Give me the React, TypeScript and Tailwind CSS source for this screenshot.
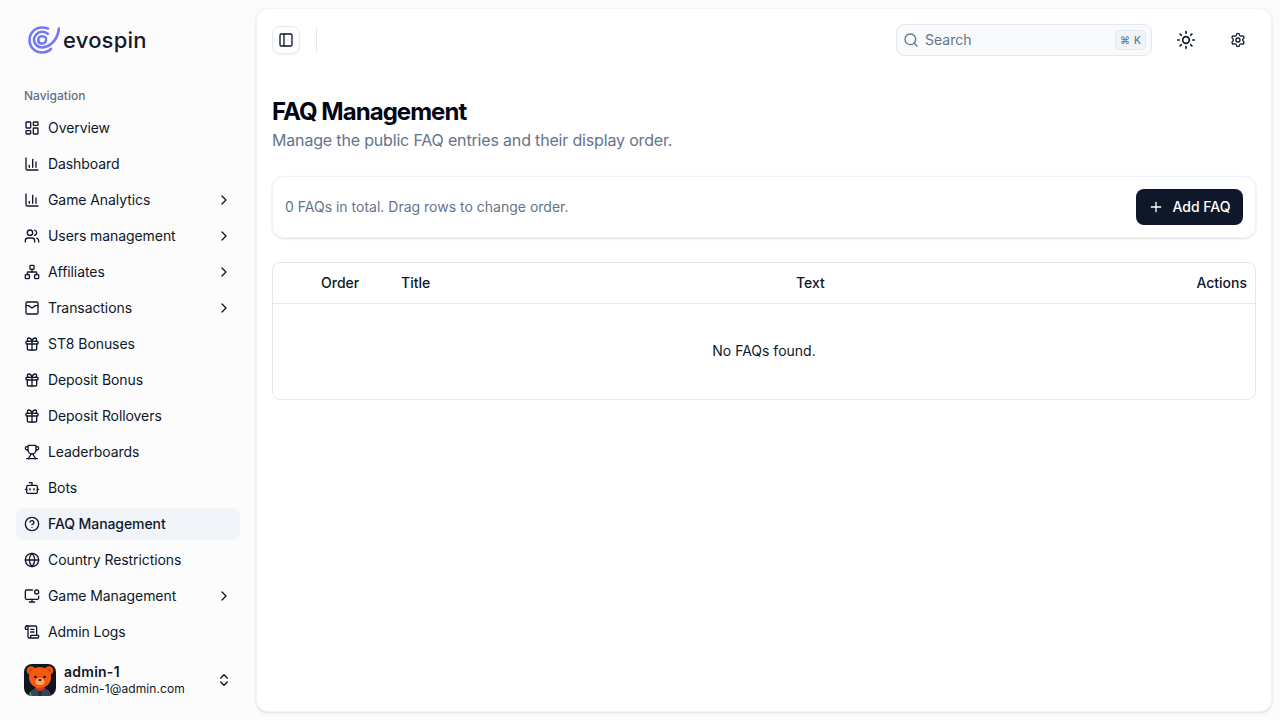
import {
  Bot,
  ChartColumn,
  ChevronRight,
  ChevronsUpDown,
  CircleHelp,
  Gift,
  Globe,
  LayoutDashboard,
  MonitorDot,
  Network,
  PanelLeft,
  Plus,
  ScrollText,
  Search,
  Settings,
  Sun,
  Trophy,
  Users,
} from 'lucide-react';
import type { ComponentType } from 'react';

const TransactionsIcon = ({ className }: { className?: string }) => (
  <svg viewBox="0 0 24 24" fill="none" stroke="currentColor" strokeWidth="2" strokeLinecap="round" strokeLinejoin="round" className={className}>
    <rect x="3" y="3" width="18" height="18" rx="2" />
    <path d="M3 8.500h4l5 3.500 5-3.500h4" />
  </svg>
);

const navItems: { label: string; icon: ComponentType<{ className?: string }>; arrow?: boolean; active?: boolean }[] = [
  { label: 'Overview', icon: LayoutDashboard },
  { label: 'Dashboard', icon: ChartColumn },
  { label: 'Game Analytics', icon: ChartColumn, arrow: true },
  { label: 'Users management', icon: Users, arrow: true },
  { label: 'Affiliates', icon: Network, arrow: true },
  { label: 'Transactions', icon: TransactionsIcon, arrow: true },
  { label: 'ST8 Bonuses', icon: Gift },
  { label: 'Deposit Bonus', icon: Gift },
  { label: 'Deposit Rollovers', icon: Gift },
  { label: 'Leaderboards', icon: Trophy },
  { label: 'Bots', icon: Bot },
  { label: 'FAQ Management', icon: CircleHelp, active: true },
  { label: 'Country Restrictions', icon: Globe },
  { label: 'Game Management', icon: MonitorDot, arrow: true },
  { label: 'Admin Logs', icon: ScrollText },
];

const Logo = () => (
  <svg viewBox="0 0 32 28" fill="none" stroke="#7178f4" strokeLinecap="round" className="h-[28px] w-[32px]">
    <path d="M20 2.500C18 1.800 16 1.500 14 1.500 7 1.500 1.500 7 1.500 14S7 26.500 14 26.500c3.500 0 6.500-1.200 9-3.500" strokeWidth="2.600" />
    <path d="M31 2.500c-1 7-4 12.500-8 15.500-3 2.300-6 3.500-9 3.500-4.300 0-8-3.300-8-7.500s3.500-8.300 8-8.300c2.200 0 4.200.7 5.800 2" strokeWidth="2.600" />
    <path d="M18 14c0 2.200-1.800 3.600-4 3.600s-3.800-1.400-3.800-3.600 1.700-3.800 3.800-3.800c1.700 0 3 .7 4 1.800" strokeWidth="2.600" />
  </svg>
);

const Avatar = () => (
  <svg viewBox="0 0 32 32" className="h-8 w-8 rounded-lg">
    <rect width="32" height="32" fill="#10151f" />
    <path d="M5 32c0-5 4-8 11-8s11 3 11 8z" fill="#39465a" />
    <path d="M5 32c0-2 .6-3.500 1.500-4.500L8 32z" fill="#2f9e58" />
    <path d="M11 24.500l5 3 5-3-1-2.500h-8z" fill="#dc3418" />
    <path d="M14.500 27h3v5h-3z" fill="#232c3b" />
    <circle cx="7" cy="6.500" r="4.300" fill="#ef5a10" />
    <circle cx="25" cy="6.500" r="4.300" fill="#ef5a10" />
    <circle cx="7" cy="6.800" r="2.200" fill="#d8430c" />
    <circle cx="25" cy="6.800" r="2.200" fill="#d8430c" />
    <ellipse cx="16" cy="13.500" rx="11" ry="10.500" fill="#f4590f" />
    <ellipse cx="16" cy="17.500" rx="4.500" ry="3.500" fill="#f9a468" />
    <circle cx="11.500" cy="13" r="1.300" fill="#1a0e08" />
    <circle cx="20.500" cy="13" r="1.300" fill="#1a0e08" />
    <ellipse cx="16" cy="16" rx="1.700" ry="1.100" fill="#2a120a" />
  </svg>
);

const App = () => {
  return (
    <div className="flex h-screen w-full overflow-hidden bg-[#fcfcfd] font-['Inter',sans-serif] text-[#0f172a]">
      <aside className="flex w-[256px] shrink-0 flex-col p-2">
        {/* Logo */}
        <div className="flex h-[63px] items-center gap-[3px] pl-[20px]">
          <Logo />
          <span className="text-[22px] font-medium leading-none tracking-[0.2px] text-[#141a2c]">evospin</span>
        </div>

        {/* Navigation */}
        <div className="flex-1 p-2 pt-[9px]">
          <div className="flex h-8 items-center px-2 text-xs font-medium text-[#5f7189]">Navigation</div>
          <ul className="flex flex-col gap-1 tracking-[-0.08px]">
            {navItems.map((item) => (
              <li
                key={item.label}
                className={`flex h-8 items-center gap-2 rounded-lg px-2 text-sm ${item.active ? 'bg-[#f1f5f9] font-medium' : ''}`}
              >
                <item.icon className="h-4 w-4 shrink-0" />
                <span className="flex-1">{item.label}</span>
                {item.arrow && <ChevronRight className="h-4 w-4 shrink-0" />}
              </li>
            ))}
          </ul>
        </div>

        {/* User */}
        <div className="mb-2 flex h-12 items-center gap-2 px-4">
          <Avatar />
          <div className="flex-1">
            <div className="text-sm font-semibold leading-[18px] tracking-[0.25px]">admin-1</div>
            <div className="text-xs leading-[16px] tracking-[0.1px]">admin-1@admin.com</div>
          </div>
          <ChevronsUpDown className="h-4 w-4" />
        </div>
      </aside>

      <main className="my-2 mr-2 flex-1 rounded-xl border border-[#f1f4f8] bg-white px-[15px] shadow-sm">
        {/* Header */}
        <header className="flex h-[62px] items-center">
          <button className="flex h-7 w-7 items-center justify-center rounded-lg border border-[#e2e8f0] shadow-xs">
            <PanelLeft className="h-4 w-4" />
          </button>
          <div className="ml-4 h-6 w-px bg-[#e2e8f0]" />
          <div className="ml-auto flex h-8 w-[256px] items-center rounded-lg border border-[#e2e8f0] bg-[#f8fafc] pl-[6px] pr-[5px] text-sm text-[#64748b]">
            <Search className="h-4 w-4" />
            <span className="ml-[6px] flex-1">Search</span>
            <span className="flex h-5 w-[31px] items-center justify-center gap-1 rounded border border-[#e2e8f0] bg-[#f1f5f9] text-[10px] font-medium leading-none">
              <span>⌘</span>
              <span>K</span>
            </span>
          </div>
          <button className="ml-4 flex h-9 w-9 items-center justify-center">
            <Sun className="h-5 w-5" />
          </button>
          <button className="ml-4 flex h-9 w-9 items-center justify-center">
            <Settings className="h-4 w-4" />
          </button>
        </header>

        {/* Page title */}
        <div className="pt-[25px]">
          <h1 className="text-2xl font-bold leading-8 tracking-[-0.96px] text-[#020617]">FAQ Management</h1>
          <p className="text-base leading-6 tracking-[-0.17px] text-[#64748b]">Manage the public FAQ entries and their display order.</p>
        </div>

        {/* Summary */}
        <div className="mt-6 flex h-[62px] items-center justify-between rounded-xl border border-[#eef1f6] px-3 shadow-sm">
          <span className="text-sm text-[#64748b]">0 FAQs in total. Drag rows to change order.</span>
          <button className="flex h-9 w-[107px] items-center justify-center gap-2 rounded-lg bg-[#0f172a] text-sm font-medium text-white">
            <Plus className="h-4 w-4" />
            Add FAQ
          </button>
        </div>

        {/* Table */}
        <div className="mt-6 overflow-hidden rounded-lg border border-[#e2e8f0]">
          <table className="w-full table-fixed text-sm">
            <thead>
              <tr className="h-10 border-b border-[#e2e8f0] text-left font-medium">
                <th className="w-10 font-medium" />
                <th className="w-20 px-2 font-medium">Order</th>
                <th className="w-[395px] px-2 font-medium">Title</th>
                <th className="px-2 font-medium">Text</th>
                <th className="w-[100px] px-2 text-right font-medium">Actions</th>
              </tr>
            </thead>
            <tbody>
              <tr>
                <td colSpan={5} className="h-24 text-center">No FAQs found.</td>
              </tr>
            </tbody>
          </table>
        </div>
      </main>
    </div>
  );
};

export default App;
